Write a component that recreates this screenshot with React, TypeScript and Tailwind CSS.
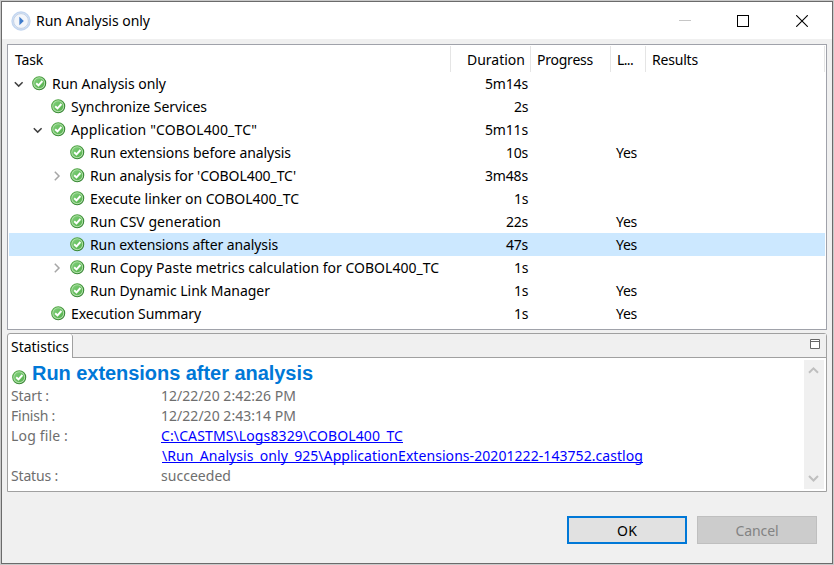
import { useLayoutEffect, useRef, useState } from 'react';

/** Single line of text whose tracking is adjusted so that it spans exactly `w` pixels. */
function Fit({ text, w, className = '' }: { text: string; w: number; className?: string }) {
  const ref = useRef<HTMLSpanElement>(null);
  const [spacing, setSpacing] = useState(0);
  useLayoutEffect(() => {
    const el = ref.current;
    if (!el) return;
    el.style.letterSpacing = '0px';
    const next = (w - el.getBoundingClientRect().width) / text.length;
    el.style.letterSpacing = `${next}px`;
    setSpacing(next);
  }, [text, w]);
  return (
    <span ref={ref} className={`inline-block shrink-0 whitespace-pre ${className}`} style={{ letterSpacing: spacing }}>
      {text}
    </span>
  );
}

function CheckIcon() {
  return (
    <svg width="15" height="15" viewBox="0 0 15 15" className="shrink-0">
      <defs>
        <linearGradient id="green" x1="0" y1="0" x2="1" y2="1">
          <stop offset="0" stopColor="#7fd07a" />
          <stop offset="1" stopColor="#55b04c" />
        </linearGradient>
        <linearGradient id="rim" x1="0" y1="0" x2="1" y2="1">
          <stop offset="0" stopColor="#5cb34f" />
          <stop offset="1" stopColor="#2c7a2b" />
        </linearGradient>
      </defs>
      <circle cx="7.2" cy="7.2" r="6.5" fill="#b4e2ac" stroke="url(#rim)" strokeWidth="1.1" />
      <circle cx="7.2" cy="7.2" r="5" fill="url(#green)" />
      <path d="M4.2 7.2 L6.5 9.4 L10.4 5" fill="none" stroke="#fff" strokeWidth="1.9" />
    </svg>
  );
}

function Chevron({ open }: { open: boolean }) {
  return (
    <svg width="12" height="12" viewBox="0 0 12 12" className="shrink-0" fill="none" strokeWidth="1.5">
      {open ? <path d="M1.8 4.2 L5.7 8.1 L9.6 4.2" stroke="#404040" /> : <path d="M3.8 1.8 L8 6 L3.8 10.2" stroke="#a6a6a6" />}
    </svg>
  );
}

type Task = {
  name: string;
  w: number;
  level: number;
  node?: 'open' | 'closed';
  time: string;
  tw: number;
  log?: boolean;
  selected?: boolean;
};

const tasks: Task[] = [
  { name: 'Run Analysis only', w: 114, level: 0, node: 'open', time: '5m14s', tw: 43 },
  { name: 'Synchronize Services', w: 136, level: 1, time: '2s', tw: 14 },
  { name: 'Application "COBOL400_TC"', w: 186, level: 1, node: 'open', time: '5m11s', tw: 43 },
  { name: 'Run extensions before analysis', w: 201, level: 2, time: '10s', tw: 22, log: true },
  { name: "Run analysis for 'COBOL400_TC'", w: 206, level: 2, node: 'closed', time: '3m48s', tw: 43 },
  { name: 'Execute linker on COBOL400_TC', w: 209, level: 2, time: '1s', tw: 14 },
  { name: 'Run CSV generation', w: 131, level: 2, time: '22s', tw: 22, log: true },
  { name: 'Run extensions after analysis', w: 188, level: 2, time: '47s', tw: 22, log: true, selected: true },
  { name: 'Run Copy Paste metrics calculation for COBOL400_TC', w: 349, level: 2, node: 'closed', time: '1s', tw: 14 },
  { name: 'Run Dynamic Link Manager', w: 180, level: 2, time: '1s', tw: 14, log: true },
  { name: 'Execution Summary', w: 130, level: 1, time: '1s', tw: 14, log: true },
];

const indent = ['pl-[4px]', 'pl-[23px]', 'pl-[42px]'];

function TaskRow({ t }: { t: Task }) {
  return (
    <div className={`flex h-[23px] items-center ${t.selected ? 'bg-[#cce8ff]' : ''}`}>
      <div className={`flex w-[440px] shrink-0 items-center ${indent[t.level]}`}>
        <div className="flex w-[19px] shrink-0 items-center">{t.node && <Chevron open={t.node === 'open'} />}</div>
        <CheckIcon />
        <Fit text={t.name} w={t.w} className="ml-[5px]" />
      </div>
      <div className="flex w-[79px] shrink-0 justify-end">
        <Fit text={t.time} w={t.tw} />
      </div>
      <div className="ml-[88px]">{t.log && <Fit text="Yes" w={21} />}</div>
    </div>
  );
}

function Detail({ label, w, value, vw }: { label: string; w: number; value: string; vw: number }) {
  return (
    <div className="flex h-5 items-center text-[#6e6e6e]">
      <div className="w-[150px] shrink-0">
        <Fit text={label} w={w} />
      </div>
      <Fit text={value} w={vw} />
    </div>
  );
}

export default function App() {
  return (
    <div className="h-[565px] w-[834px] overflow-hidden bg-[#c9c9c9] p-px font-['Noto_Sans',sans-serif] text-[14px] leading-[20px] text-black">
      <div className="flex h-[563px] w-[832px] flex-col border border-[#6b6b6b] bg-[#f0f0f0]">
        <header className="flex h-[37px] shrink-0 items-center bg-white pl-[9px]">
          <svg width="20" height="20" viewBox="0 0 20 20">
            <circle cx="10" cy="10" r="9" fill="#dce8f8" stroke="#c3d6f0" strokeWidth="1.4" />
            <circle cx="10" cy="10" r="7.4" fill="#f3f6fb" stroke="#b9c9e0" strokeWidth="0.8" />
            <path d="M8.4 5.8 L12.8 10 L8.4 14.2 Z" fill="#3f7ccb" />
          </svg>
          <Fit text="Run Analysis only" w={114} className="ml-[5px]" />
          <div className="ml-auto flex items-center pr-[24px]">
            <div className="mr-[46px] h-px w-3 bg-[#c6c6c6]" />
            <div className="mr-[47px] h-3 w-3 border border-black" />
            <svg width="12" height="12" viewBox="0 0 12 12" stroke="#000" strokeWidth="1.1">
              <path d="M0.2 0.2 L11.8 11.8 M11.8 0.2 L0.2 11.8" />
            </svg>
          </div>
        </header>

        <section className="ml-[5px] mt-[5px] h-[286px] w-[820px] shrink-0 border border-[#a0a2aa] bg-white px-px pt-px">
          <div className="flex h-[26px]">
            <div className="flex w-[442px] items-center border-r border-[#e5e5e5] pl-[6px] pt-0.5">
              <Fit text="Task" w={28} />
            </div>
            <div className="flex w-[80px] items-center justify-end border-r border-[#e5e5e5] pr-[5px] pt-0.5">
              <Fit text="Duration" w={58} />
            </div>
            <div className="flex w-[80px] items-center border-r border-[#e5e5e5] pl-[6px] pt-0.5">
              <Fit text="Progress" w={56} />
            </div>
            <div className="flex w-[35px] items-center border-r border-[#e5e5e5] pl-[6px] pt-0.5">
              <Fit text="L..." w={16} />
            </div>
            <div className="flex w-[179px] items-center border-r border-[#e5e5e5] pl-[6px] pt-0.5">
              <Fit text="Results" w={46} />
            </div>
          </div>
          {tasks.map((t) => (
            <TaskRow key={t.name} t={t} />
          ))}
        </section>

        <section className="ml-[5px] mt-[3px] flex h-[159px] w-[820px] shrink-0 flex-col rounded-t-[3px] border border-[#a0a0a0] bg-white">
          <div className="flex h-[24px] shrink-0">
            <div className="flex w-[65px] items-center rounded-tr-[3px] border-r border-[#a0a0a0] pl-[3px] pt-[2px]">
              <Fit text="Statistics" w={58} />
            </div>
            <div className="flex flex-1 justify-end border-b border-[#a0a0a0] bg-[#f0f0f0] pr-[6px] pt-[5px]">
              <svg width="10" height="10" viewBox="0 0 10 10" fill="#fff" stroke="#666">
                <path d="M0.5 0.5 H9.5 V9.5 H0.5 Z M0.5 2.5 H9.5" />
              </svg>
            </div>
          </div>
          <div className="flex flex-1">
            <div className="flex-1 pl-[3px] pt-[3px]">
              <div className="flex h-[25px] pl-px">
                <div className="pt-[9px]">
                  <CheckIcon />
                </div>
                <Fit
                  text="Run extensions after analysis"
                  w={281}
                  className="ml-[5px] font-['Liberation_Sans',sans-serif] text-[20px] font-bold leading-[24px] text-[#0078d7]"
                />
              </div>
              <Detail label="Start :" w={38} value="12/22/20 2:42:26 PM" vw={135} />
              <Detail label="Finish :" w={44} value="12/22/20 2:43:14 PM" vw={135} />
              <div className="flex h-10 text-[#6e6e6e]">
                <div className="w-[150px] shrink-0">
                  <Fit text="Log file :" w={57} />
                </div>
                <div className="flex flex-col items-start text-[#0000ff]">
                  <Fit
                    text="C:\CASTMS\Logs8329\COBOL400_TC"
                    w={242}
                    className="underline decoration-1 underline-offset-[1px] [text-decoration-skip-ink:none]"
                  />
                  <Fit
                    text="\Run_Analysis_only_925\ApplicationExtensions-20201222-143752.castlog"
                    w={481}
                    className="ml-px underline decoration-1 underline-offset-[1px] [text-decoration-skip-ink:none]"
                  />
                </div>
              </div>
              <Detail label="Status :" w={47} value="succeeded" vw={70} />
            </div>
            <div className="mb-[2px] mr-[2px] mt-[2px] flex w-[20px] flex-col items-center justify-between bg-[#f0f0f0] py-[5px]">
              <svg width="12" height="10" viewBox="0 0 12 10" fill="none" stroke="#bfbfbf" strokeWidth="2">
                <path d="M1 7.8 L5.5 3.3 L10 7.8" />
              </svg>
              <svg width="12" height="10" viewBox="0 0 12 10" fill="none" stroke="#bfbfbf" strokeWidth="2">
                <path d="M1 2 L5.5 6.5 L10 2" />
              </svg>
            </div>
          </div>
        </section>

        <footer className="mt-[24px] flex justify-end gap-[10px] pr-[15px]">
          <button className="flex h-[28px] w-[120px] items-center justify-center border-2 border-[#0078d7] bg-[#e1e1e1] pt-px">
            <Fit text="OK" w={20} />
          </button>
          <button className="flex h-[28px] w-[120px] items-center justify-center border border-[#bfbfbf] bg-[#cccccc] pt-px text-[#838383]">
            <Fit text="Cancel" w={43} />
          </button>
        </footer>
      </div>
    </div>
  );
}
